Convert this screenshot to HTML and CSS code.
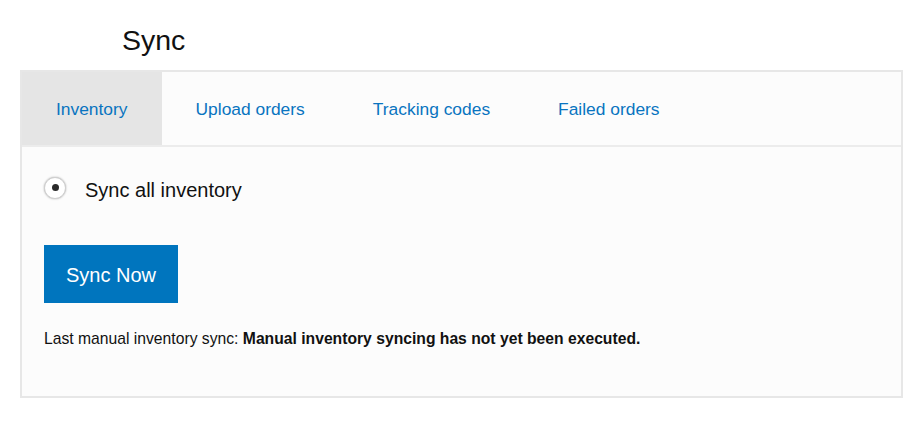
FILE: index.html
```html
<!DOCTYPE html>
<html lang="en">
<head>
<meta charset="utf-8">
<title>Sync</title>
<link rel="stylesheet" href="styles.css">
</head>
<body>
<h1 class="page-title">Sync</h1>
<div class="panel">
  <nav class="tabs">
    <a class="tab tab-active" href="#">Inventory</a>
    <a class="tab" href="#">Upload orders</a>
    <a class="tab" href="#">Tracking codes</a>
    <a class="tab" href="#">Failed orders</a>
  </nav>
  <div class="content">
    <label class="radio-row">
      <span class="radio"><span class="radio-dot"></span></span>
      <span class="radio-label">Sync all inventory</span>
    </label>
    <button class="btn" type="button">Sync Now</button>
    <p class="status">Last manual inventory sync: <strong>Manual inventory syncing has not yet been executed.</strong></p>
  </div>
</div>
</body>
</html>
```

FILE: styles.css
```css
* { box-sizing: border-box; }
html, body {
  margin: 0;
  padding: 0;
  background: #ffffff;
  font-family: "Liberation Sans", Arial, Helvetica, sans-serif;
  color: #111;
}
.page-title {
  margin: 0;
  padding: 26px 0 0 122px;
  height: 70px;
  font-size: 28.5px;
  line-height: 28px;
  font-weight: normal;
  color: #111;
}
.panel {
  margin: 0 20px;
  border: 2px solid #e7e7e7;
  background: #fcfcfc;
}
.tabs {
  display: flex;
  height: 75px;
  border-bottom: 2px solid #ececec;
}
.tab {
  display: block;
  padding: 1px 34px 0 34px;
  line-height: 72px;
  font-size: 17.4px;
  color: #0974c0;
  text-decoration: none;
}
.tab-active {
  background: #e5e5e5;
}
.content {
  padding: 29px 22px 48px 22px;
}
.radio-row {
  display: flex;
  align-items: center;
  height: 23px;
}
.radio {
  width: 22px;
  height: 22px;
  border-radius: 50%;
  background: #fff;
  border: 1px solid #cfcfcf;
  box-shadow: 0 0 2px rgba(0,0,0,0.3);
  display: flex;
  align-items: center;
  justify-content: center;
}
.radio-dot {
  width: 7px;
  height: 7px;
  border-radius: 50%;
  background: #2a2a2a;
}
.radio-label {
  margin-left: 19px;
  font-size: 20px;
  color: #111;
  position: relative;
  top: 3px;
}
.btn {
  display: block;
  margin-top: 46px;
  width: 134px;
  height: 58px;
  padding: 3px 0 0 0;
  border: 0;
  background: #0075be;
  color: #fff;
  font-family: "Liberation Sans", Arial, Helvetica, sans-serif;
  font-size: 20px;
}
.status {
  margin: 27px 0 0 0;
  font-size: 15.7px;
  line-height: 18px;
  color: #111;
}
.status strong {
  font-weight: bold;
}
```
